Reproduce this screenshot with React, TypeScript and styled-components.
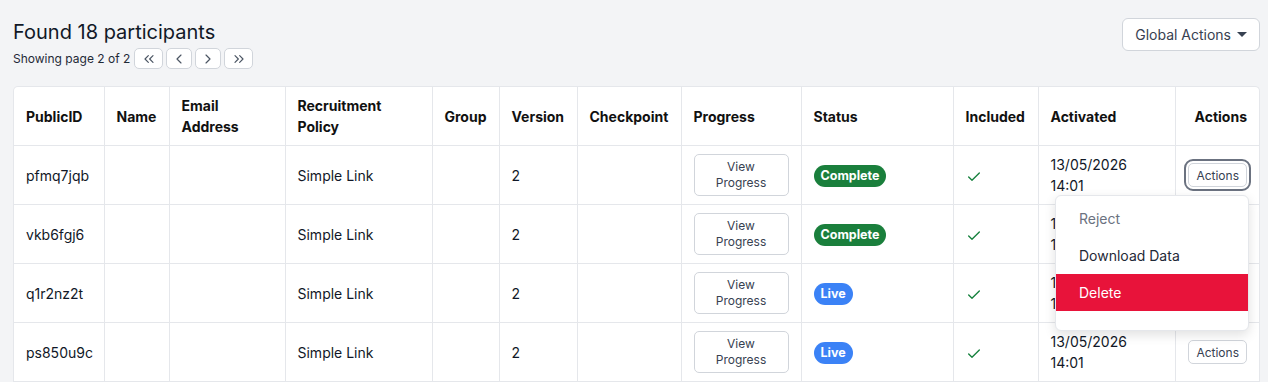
import React from "react";
import styled, { createGlobalStyle } from "styled-components";
import { Check, ChevronLeft, ChevronRight, ChevronsLeft, ChevronsRight } from "lucide-react";

const GlobalStyle = createGlobalStyle`
  body {
    margin: 0;
    background: #f3f4f6;
    font-family: Inter, "Noto Sans", sans-serif;
    color: #111827;
    overflow: hidden;
  }
`;

const Page = styled.div`
  padding: 18px 8px 0 13px;
`;

const TopBar = styled.div`
  display: flex;
  justify-content: space-between;
  align-items: flex-start;
  margin-bottom: 16px;
`;

const Title = styled.h1`
  margin: 0;
  font-size: 20px;
  font-weight: 400;
  line-height: 29px;
  color: #111827;
`;

const PagerRow = styled.div`
  display: flex;
  align-items: center;
  gap: 3px;
  font-size: 12px;
  color: #1f2937;
  height: 23px;
`;

const PagerLabel = styled.span`
  margin-right: 1px;
`;

const PagerButton = styled.button<{ $w: number }>`
  width: ${(p) => p.$w}px;
  height: 21px;
  display: flex;
  align-items: center;
  justify-content: center;
  padding: 0;
  background: #fff;
  border: 1px solid #d1d5db;
  border-radius: 5px;
  color: #4b5563;
`;

const GlobalButton = styled.button`
  display: flex;
  align-items: center;
  gap: 6px;
  height: 33px;
  padding: 0 12px;
  background: #fff;
  border: 1px solid #d1d5db;
  border-radius: 6px;
  font-family: inherit;
  font-size: 14px;
  color: #374151;
`;

const Caret = styled.span`
  width: 0;
  height: 0;
  border-left: 5px solid transparent;
  border-right: 5px solid transparent;
  border-top: 5px solid #374151;
`;

const TableWrap = styled.div`
  position: relative;
  background: #fff;
  border: 1px solid #e5e7eb;
  border-bottom: none;
  border-radius: 5px 5px 0 0;
`;

const Table = styled.table`
  width: 100%;
  border-collapse: collapse;
  table-layout: fixed;
  font-size: 14px;
  line-height: 21px;
`;

const Th = styled.th<{ $right?: boolean }>`
  text-align: ${(p) => (p.$right ? "right" : "left")};
  font-weight: 700;
  padding: 8px 12px;
  height: 42px;
  border-bottom: 1px solid #e5e7eb;
  border-left: 1px solid #e5e7eb;
  color: #111;
  &:first-child {
    border-left: none;
  }
`;

const Td = styled.td<{ $right?: boolean }>`
  text-align: ${(p) => (p.$right ? "right" : "left")};
  padding: 8px 12px;
  height: 42px;
  border-bottom: 1px solid #e5e7eb;
  border-left: 1px solid #e5e7eb;
  vertical-align: middle;
  color: #111827;
  &:first-child {
    border-left: none;
  }
`;

const ProgressButton = styled.button`
  width: 95px;
  height: 42px;
  padding: 4px 8px;
  background: #fff;
  border: 1px solid #d1d5db;
  border-radius: 5px;
  font-family: inherit;
  font-size: 12px;
  line-height: 16px;
  color: #374151;
`;

const Badge = styled.span<{ $tone: "green" | "blue" }>`
  display: inline-block;
  padding: 0 7px;
  height: 22px;
  line-height: 22px;
  border-radius: 11px;
  font-size: 12.5px;
  font-weight: 700;
  color: #fff;
  background: ${(p) => (p.$tone === "green" ? "#1a7f3c" : "#3b82f6")};
`;

const RowButton = styled.button<{ $focused?: boolean }>`
  height: 24px;
  padding: 0 7px;
  background: #fff;
  border: 1px solid #d1d5db;
  border-radius: 5px;
  font-family: inherit;
  font-size: 12px;
  color: #374151;
  outline: ${(p) => (p.$focused ? "2px solid #6b7280" : "none")};
  outline-offset: 2px;
`;

const Menu = styled.div`
  position: absolute;
  left: 1041px;
  top: 108px;
  width: 192px;
  padding: 4px 0 19px;
  background: #fff;
  border: 1px solid #e5e7eb;
  border-radius: 6px;
  box-shadow: 0 4px 12px rgba(0, 0, 0, 0.12);
`;

const MenuItem = styled.div<{ $variant?: "muted" | "danger" }>`
  height: 37px;
  line-height: 37px;
  padding-left: 23px;
  font-size: 14px;
  color: ${(p) =>
    p.$variant === "muted" ? "#6b7280" : p.$variant === "danger" ? "#fff" : "#1f2937"};
  background: ${(p) => (p.$variant === "danger" ? "#e8133a" : "transparent")};
`;

interface Participant {
  id: string;
  status: "Complete" | "Live";
}

const participants: Participant[] = [
  { id: "pfmq7jqb", status: "Complete" },
  { id: "vkb6fgj6", status: "Complete" },
  { id: "q1r2nz2t", status: "Live" },
  { id: "ps850u9c", status: "Live" },
];

const widths = [90, 65, 116, 147, 67, 78, 104, 120, 152, 85, 137, 84];

const App = () => {
  return (
    <Page>
      <GlobalStyle />
      <TopBar>
        <div>
          <Title>Found 18 participants</Title>
          <PagerRow>
            <PagerLabel>Showing page 2 of 2</PagerLabel>
            <PagerButton $w={29}>
              <ChevronsLeft size={16} strokeWidth={1.75} />
            </PagerButton>
            <PagerButton $w={26}>
              <ChevronLeft size={16} strokeWidth={1.75} />
            </PagerButton>
            <PagerButton $w={26}>
              <ChevronRight size={16} strokeWidth={1.75} />
            </PagerButton>
            <PagerButton $w={29}>
              <ChevronsRight size={16} strokeWidth={1.75} />
            </PagerButton>
          </PagerRow>
        </div>
        <GlobalButton>
          Global Actions <Caret />
        </GlobalButton>
      </TopBar>

      <TableWrap>
        <Table>
          <colgroup>
            {widths.map((w, i) => (
              <col key={i} style={{ width: w }} />
            ))}
          </colgroup>
          <thead>
            <tr>
              <Th>PublicID</Th>
              <Th>Name</Th>
              <Th>Email Address</Th>
              <Th>Recruitment Policy</Th>
              <Th>Group</Th>
              <Th>Version</Th>
              <Th>Checkpoint</Th>
              <Th>Progress</Th>
              <Th>Status</Th>
              <Th>Included</Th>
              <Th>Activated</Th>
              <Th $right>Actions</Th>
            </tr>
          </thead>
          <tbody>
            {participants.map((p, i) => (
              <tr key={p.id}>
                <Td>{p.id}</Td>
                <Td />
                <Td />
                <Td>Simple Link</Td>
                <Td />
                <Td>2</Td>
                <Td />
                <Td>
                  <ProgressButton>View Progress</ProgressButton>
                </Td>
                <Td>
                  <Badge $tone={p.status === "Complete" ? "green" : "blue"}>{p.status}</Badge>
                </Td>
                <Td>
                  <Check size={16} color="#15803d" strokeWidth={2} style={{ verticalAlign: "middle" }} />
                </Td>
                <Td>
                  13/05/2026
                  <br />
                  14:01
                </Td>
                <Td $right>
                  <RowButton $focused={i === 0}>Actions</RowButton>
                </Td>
              </tr>
            ))}
          </tbody>
        </Table>
        <Menu>
          <MenuItem $variant="muted">Reject</MenuItem>
          <MenuItem>Download Data</MenuItem>
          <MenuItem $variant="danger">Delete</MenuItem>
        </Menu>
      </TableWrap>
    </Page>
  );
};

export default App;
